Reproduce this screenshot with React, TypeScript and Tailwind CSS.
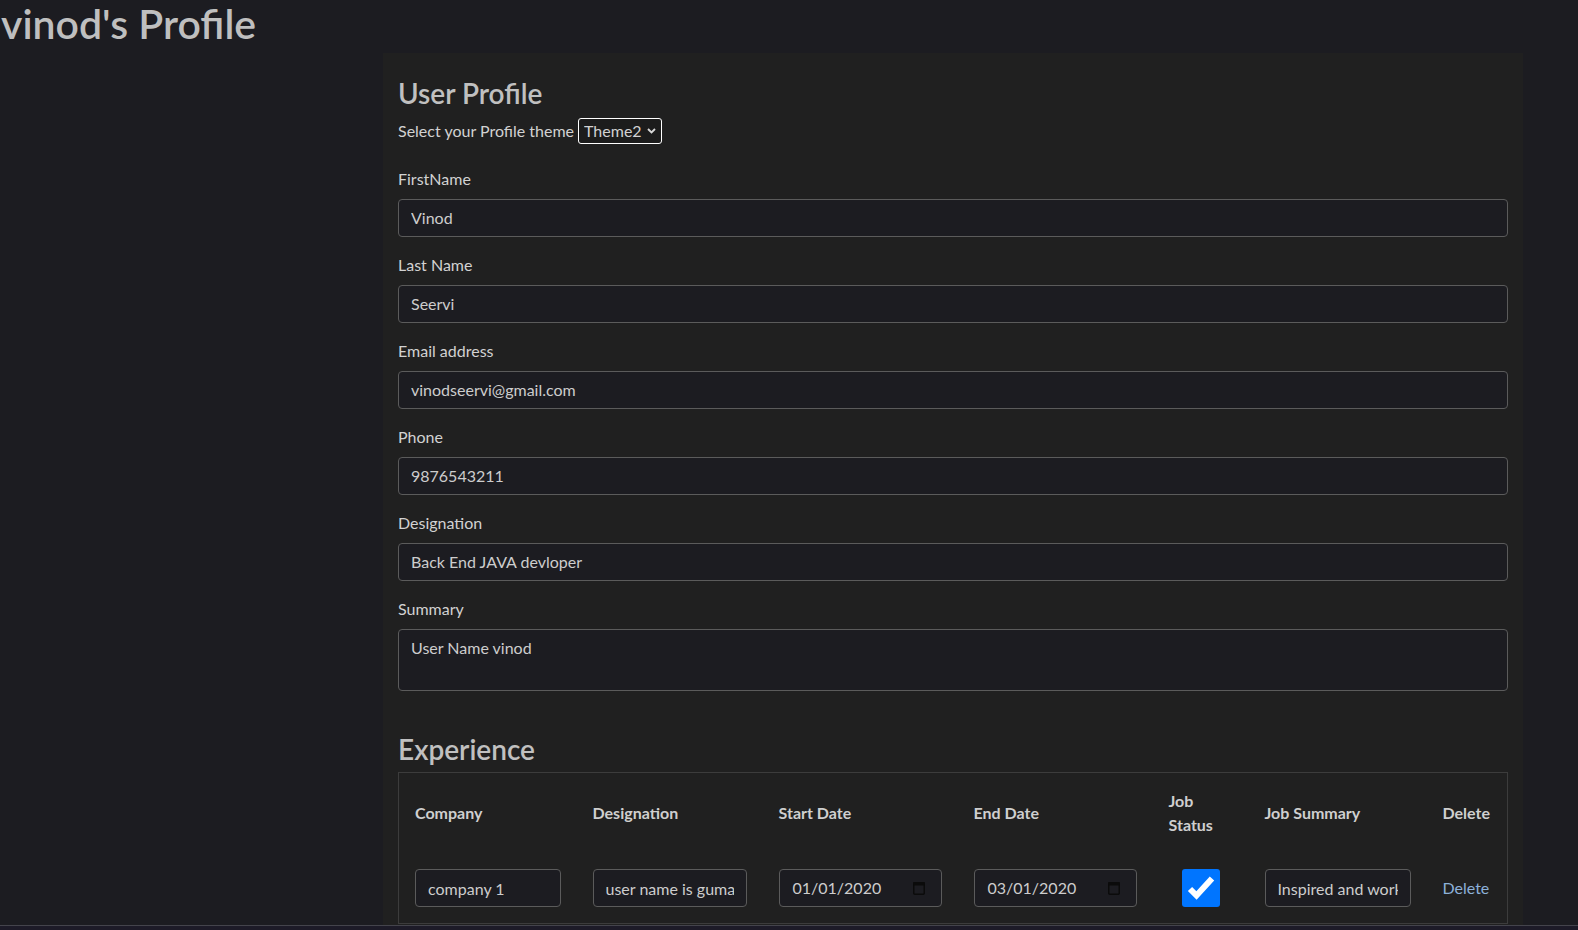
import React from 'react';

const inputCls =
  'block w-full h-[38px] rounded-[4px] border border-[#5b5b5b] bg-[#1c1c21] px-3 text-[16px] leading-6 text-[#cdcdcd] outline-none';

function Field({ label, value }: { label: string; value: string }) {
  return (
    <div className="mb-4">
      <label className="mb-2 block text-[16px] leading-6 text-[#d2d2d2]">{label}</label>
      <input className={inputCls} value={value} readOnly />
    </div>
  );
}

function DateBox({ value }: { value: string }) {
  return (
    <div className="flex h-[38px] w-[163px] items-center justify-between rounded-[4px] border border-[#5b5b5b] bg-[#1c1c21] pl-[13px] pr-[16px] text-[16px] text-[#cdcdcd]">
      <span>{value}</span>
      <svg width="12" height="14" viewBox="0 0 12 14">
        <rect x="0.75" y="1.75" width="10.5" height="11.5" rx="1" fill="none" stroke="#0b0b0b" strokeWidth="1.5" />
        <rect x="0" y="1" width="12" height="3.5" rx="1" fill="#0b0b0b" />
      </svg>
    </div>
  );
}

export default function App() {
  return (
    <div
      className="flex h-[930px] w-[1578px] flex-col overflow-hidden bg-[#1c1c21]"
      style={{ fontFamily: "Lato, 'Open Sans', sans-serif" }}
    >
      <div className="flex-1 overflow-hidden">
        <h1 className="h-[48px] pl-[1px] text-[41px] font-semibold leading-[48px] text-[#bfbfbf]">vinod's Profile</h1>

        <div className="mt-[5px] ml-[383px] w-[1140px] bg-[#202020] px-[15px] pt-6 pb-10">
          <h3 className="mb-2 text-[28px] font-semibold leading-[33.6px] text-[#c0c0c0]">User Profile</h3>

          <div className="mb-6 flex h-6 items-center text-[16px] text-[#d2d2d2]">
            <span>Select your Profile theme</span>
            <div className="relative ml-[4px]">
              <select
                className="h-[26px] appearance-none rounded-[3px] border border-white bg-[#1c1c1c] pl-[5px] pr-[19px] text-[16px] text-[#d2d2d2] outline-none"
                defaultValue="Theme2"
              >
                <option>Theme1</option>
                <option>Theme2</option>
              </select>
              <svg
                className="pointer-events-none absolute right-[6px] top-[10px]"
                width="9"
                height="6"
                viewBox="0 0 9 6"
              >
                <polyline points="1,1 4.5,4.5 8,1" fill="none" stroke="#d8d8d8" strokeWidth="1.8" />
              </svg>
            </div>
          </div>

          <Field label="FirstName" value="Vinod" />
          <Field label="Last Name" value="Seervi" />
          <Field label="Email address" value="vinodseervi@gmail.com" />
          <Field label="Phone" value="9876543211" />
          <Field label="Designation" value="Back End JAVA devloper" />

          <div>
            <label className="mb-2 block text-[16px] leading-6 text-[#d2d2d2]">Summary</label>
            <textarea
              className="block h-[62px] w-full resize-none rounded-[4px] border border-[#5b5b5b] bg-[#1c1c21] px-3 py-[6px] text-[16px] leading-6 text-[#cdcdcd] outline-none"
              value="User Name vinod"
              readOnly
            />
          </div>

          <h3 className="mt-[42px] mb-[6px] text-[28px] font-semibold leading-[33.6px] text-[#c0c0c0]">Experience</h3>

          <table className="w-full table-fixed border-collapse border border-[#3c3c3c] text-[16px] text-[#cfcfcf]">
            <colgroup>
              <col className="w-[178px]" />
              <col className="w-[186px]" />
              <col className="w-[195px]" />
              <col className="w-[195px]" />
              <col className="w-[96px]" />
              <col className="w-[178px]" />
              <col />
            </colgroup>
            <thead>
              <tr className="text-left font-bold leading-6">
                <th className="p-4 align-middle">Company</th>
                <th className="p-4 align-middle">Designation</th>
                <th className="p-4 align-middle">Start Date</th>
                <th className="p-4 align-middle">End Date</th>
                <th className="p-4 align-middle">Job Status</th>
                <th className="p-4 align-middle">Job Summary</th>
                <th className="p-4 align-middle">Delete</th>
              </tr>
            </thead>
            <tbody>
              <tr>
                <td className="p-4 align-middle">
                  <input className={inputCls + ' !w-[146px]'} value="company 1" readOnly />
                </td>
                <td className="p-4 align-middle">
                  <input className={inputCls + ' !w-[154px]'} value="user name is gumaan seervi" readOnly />
                </td>
                <td className="p-4 align-middle">
                  <DateBox value="01/01/2020" />
                </td>
                <td className="p-4 align-middle">
                  <DateBox value="03/01/2020" />
                </td>
                <td className="p-4 align-middle">
                  <div className="mx-auto h-[38px] w-[38px] rounded-[3px] bg-[#0075ff]">
                    <svg width="38" height="38" viewBox="0 0 38 38">
                      <polyline points="8,20 14.5,26.5 30,9.5" fill="none" stroke="#ffffff" strokeWidth="6" />
                    </svg>
                  </div>
                </td>
                <td className="p-4 align-middle">
                  <input className={inputCls + ' !w-[146px]'} value="Inspired and working hard" readOnly />
                </td>
                <td className="p-4 align-middle">
                  <a href="#" className="text-[#8db1d9]">Delete</a>
                </td>
              </tr>
            </tbody>
          </table>
        </div>
      </div>
      <div className="h-[5px] border-t border-[#44444c] bg-[#1d1b28]" />
    </div>
  );
}
